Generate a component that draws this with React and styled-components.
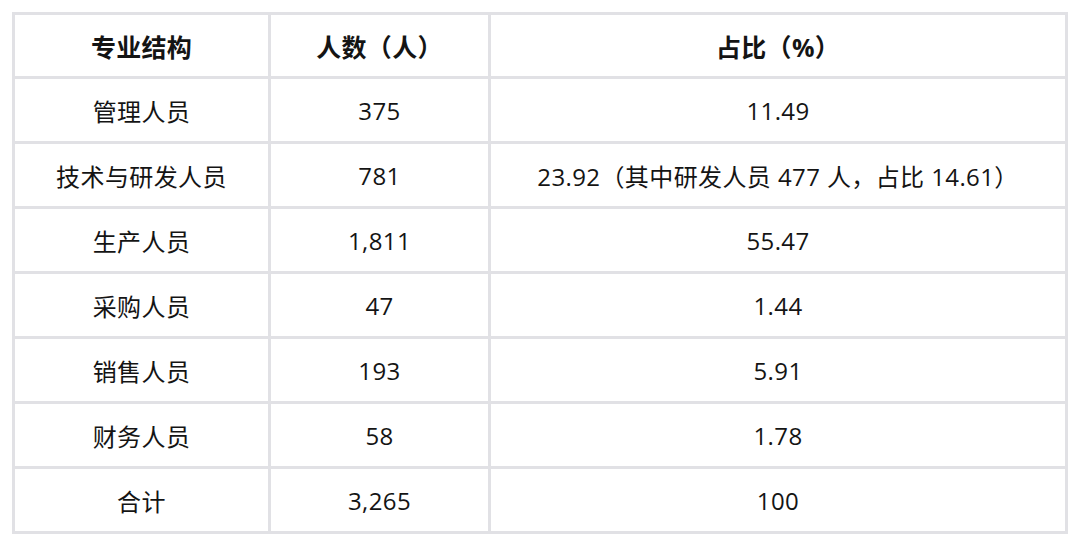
import React from "react";
import styled, { createGlobalStyle } from "styled-components";

const Global = createGlobalStyle`
  html, body { margin: 0; padding: 0; background: #ffffff; }
  body { font-family: "Open Sans", "Noto Sans CJK SC", sans-serif; }
`;

const Page = styled.div`
  padding: 12px 0 0 12px;
`;

const Grid = styled.div`
  width: 1056px;
  box-sizing: border-box;
  display: grid;
  grid-template-columns: 253px 217px 574px;
  grid-template-rows: 61px repeat(7, 62px);
  gap: 3px;
  padding: 3px;
  background: #e1e1e5;
`;

const Cell = styled.div`
  background: #ffffff;
  display: flex;
  align-items: center;
  justify-content: center;
  font-size: ${(p) => (p.$head ? "25px" : "24px")};
  letter-spacing: ${(p) => (p.$head ? "0.3px" : "0.4px")};
  color: #141414;
  font-weight: ${(p) => (p.$head ? 700 : 400)};
  white-space: nowrap;
`;

const header = ["专业结构", "人数（人）", "占比（%）"];
const rows = [
  ["管理人员", "375", "11.49"],
  ["技术与研发人员", "781", "23.92（其中研发人员 477 人，占比 14.61）"],
  ["生产人员", "1,811", "55.47"],
  ["采购人员", "47", "1.44"],
  ["销售人员", "193", "5.91"],
  ["财务人员", "58", "1.78"],
  ["合计", "3,265", "100"],
];

export default function App() {
  return (
    <Page>
      <Global />
      <Grid>
        {header.map((h) => (
          <Cell key={h} $head>
            {h}
          </Cell>
        ))}
        {rows.map((r) =>
          r.map((c, i) => <Cell key={r[0] + i}>{c}</Cell>)
        )}
      </Grid>
    </Page>
  );
}
